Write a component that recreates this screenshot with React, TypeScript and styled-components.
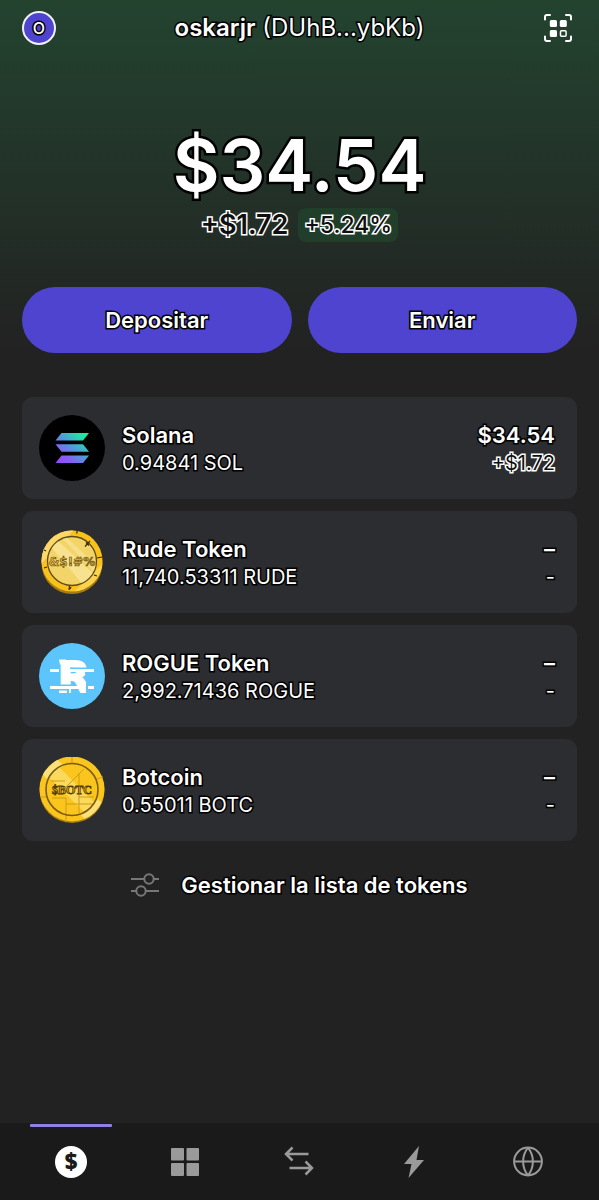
import React from "react";
import styled, { createGlobalStyle, css } from "styled-components";

const GlobalStyle = createGlobalStyle`
  *, *::before, *::after { box-sizing: border-box; }
  body {
    margin: 0;
    background: #222222;
    color: #ffffff;
    font-family: Inter, "Liberation Sans", sans-serif;
  }
  button { font: inherit; color: inherit; border: 0; padding: 0; background: none; cursor: pointer; }
  svg { display: block; flex: none; }
`;

const outlined = css`
  color: #ffffff;
  -webkit-text-stroke: 3px #000000;
  paint-order: stroke fill;
`;

const outlinedInverse = css`
  color: #101010;
  -webkit-text-stroke: 3px #ffffff;
  paint-order: stroke fill;
`;

const Page = styled.div`
  min-height: 100vh;
  display: flex;
  flex-direction: column;
  background: linear-gradient(#23432f 0, #222222 350px) #222222;
`;

const Header = styled.header`
  display: grid;
  grid-template-columns: 34px 1fr 34px;
  align-items: center;
  height: 56px;
  padding: 0 22px;
`;

const Avatar = styled.button`
  && {
    ${outlined}
    width: 34px;
    height: 34px;
    border: 2px solid #f0f0f8;
    border-radius: 50%;
    background: #4f44cf;
    font-size: 16px;
    font-weight: 500;
    line-height: 30px;
  }
`;

const WalletName = styled.h1`
  ${outlined}
  margin: 0;
  text-align: center;
  font-size: 24px;
  line-height: 32px;
  font-weight: 400;
  strong { font-weight: 600; }
`;

const ScanButton = styled.button`
  justify-self: start;
`;

const Main = styled.main`
  flex: 1;
  padding: 0 22px 24px;
`;

const Balance = styled.section`
  display: flex;
  flex-direction: column;
  align-items: center;
  padding-top: 66px;
`;

const Total = styled.div`
  ${outlined}
  -webkit-text-stroke-width: 5px;
  font-size: 72px;
  line-height: 86px;
  font-weight: 600;
`;

const ChangeRow = styled.div`
  display: flex;
  align-items: center;
  gap: 10px;
`;

const Change = styled.span`
  ${outlinedInverse}
  font-size: 27px;
  line-height: 34px;
  font-weight: 600;
`;

const Badge = styled.span`
  ${outlinedInverse}
  padding: 0 6px;
  border-radius: 8px;
  background: #213e2b;
  font-size: 23px;
  line-height: 34px;
  font-weight: 500;
`;

const Actions = styled.div`
  display: grid;
  grid-template-columns: 1fr 1fr;
  gap: 16px;
  margin-top: 45px;
`;

const ActionButton = styled.button`
  && {
    ${outlined}
    height: 66px;
    border-radius: 33px;
    background: #4f44cf;
    font-size: 22px;
    font-weight: 600;
  }
`;

const TokenList = styled.ul`
  list-style: none;
  margin: 44px 0 0;
  padding: 0;
  display: flex;
  flex-direction: column;
  gap: 12px;
`;

const TokenCard = styled.li`
  display: flex;
  align-items: center;
  gap: 17px;
  height: 102px;
  padding: 0 22px 0 17px;
  border-radius: 11px;
  background: #2c2d30;
`;

const TokenColumn = styled.div<{ $end?: boolean }>`
  display: flex;
  flex-direction: column;
  padding-top: 2px;
  ${(p) => (p.$end ? "align-items: flex-end; margin-left: auto;" : "")}
`;

const Strong = styled.span`
  ${outlined}
  font-size: 22px;
  line-height: 28px;
  font-weight: 600;
`;

const Small = styled.span<{ $inverse?: boolean }>`
  ${(p) => (p.$inverse ? outlinedInverse : outlined)}
  font-size: 20px;
  line-height: 28px;
`;

const ManageButton = styled.button`
  && {
    ${outlined}
    display: flex;
    align-items: center;
    gap: 22px;
    margin: 28px auto 0;
    font-size: 22px;
    line-height: 32px;
    font-weight: 600;
  }
`;

const TabBar = styled.nav`
  display: grid;
  grid-template-columns: repeat(5, 1fr);
  height: 77px;
  padding: 0 14px;
  background: #1a1a1a;
`;

const Tab = styled.button<{ $active?: boolean }>`
  && {
    display: flex;
    flex-direction: column;
    align-items: center;
    color: ${(p) => (p.$active ? "#ffffff" : "#9a9a9a")};
  }
  &::before {
    content: "";
    width: 82px;
    height: 3px;
    margin: 1px 0 19px;
    border-radius: 1px;
    background: ${(p) => (p.$active ? "#8f80e6" : "transparent")};
  }
`;

const ScanIcon = () => (
  <svg width="30" height="30" viewBox="0 0 30 30" fill="none" stroke="#fff" strokeWidth="2" strokeLinecap="round">
    <path d="M2 6.500V4a2 2 0 0 1 2-2h3M23 2h3a2 2 0 0 1 2 2v2.500M28 23.500V26a2 2 0 0 1-2 2h-3M7 28H4a2 2 0 0 1-2-2v-2.500" />
    <rect x="6.800" y="7" width="7.200" height="7" rx="1.500" fill="#fff" stroke="none" />
    <rect x="16.800" y="7" width="7" height="7" rx="1.500" fill="#fff" stroke="none" />
    <rect x="6.800" y="17" width="7.200" height="7" rx="1.500" fill="#fff" stroke="none" />
    <rect x="17.500" y="17.700" width="5.600" height="5.600" rx="1" strokeWidth="1.500" />
  </svg>
);

const SolanaLogo = () => (
  <svg width="66" height="66" viewBox="0 0 66 66">
    <defs>
      <linearGradient id="sol" gradientUnits="userSpaceOnUse" x1="18" y1="49" x2="46" y2="17">
        <stop offset="0" stopColor="#9945ff" />
        <stop offset=".25" stopColor="#8a5cf5" />
        <stop offset=".55" stopColor="#4f9bdc" />
        <stop offset=".85" stopColor="#22e0a6" />
        <stop offset="1" stopColor="#19f09c" />
      </linearGradient>
    </defs>
    <circle cx="33" cy="33" r="33" fill="#000" />
    <g fill="url(#sol)">
      <path d="M22.500 18H50L44 25.500H16.500z" />
      <path d="M16.500 29.300H44L50 36.700H22.500z" />
      <path d="M22.500 40.500H50L44 48H16.500z" />
    </g>
  </svg>
);

const RudeLogo = () => (
  <svg width="66" height="66" viewBox="0 0 66 66">
    <defs>
      <clipPath id="rudeFace"><circle cx="33" cy="32" r="24" /></clipPath>
      <clipPath id="rudeRim"><circle cx="33" cy="32" r="30.500" /></clipPath>
    </defs>
    <circle cx="33" cy="34.500" r="30.500" fill="#a87c14" />
    <circle cx="33" cy="32" r="30.500" fill="#f9c11c" />
    <g clipPath="url(#rudeRim)">
      <path d="M0 20L20 0H36L0 37z" fill="#fbd867" />
      <path d="M32 66L66 32V48L48 66z" fill="#fbd34f" />
    </g>
    <circle cx="33" cy="32" r="24.500" fill="#f3d468" stroke="#5d4a17" strokeWidth="1.300" />
    <g clipPath="url(#rudeFace)">
      <path d="M12 18L18 11L56 46L46 58z" fill="#fbe9a6" opacity=".65" />
      <path d="M22 8L26 7L62 40L58 46z" fill="#fbe9a6" opacity=".5" />
    </g>
    <path d="M38.500 1.500l-1 3M51 12l-5 5.500m1-4l3 3M5 21l2 1M5 39l3-1M30.500 57l-.500 4m2-3l-1 2M55 46l3 1M58 29l5-1" stroke="#3c2c08" strokeWidth="1.200" fill="none" />
    <text x="33" y="36.500" textAnchor="middle" fontFamily="DejaVu Sans, sans-serif" fontWeight="700" fontSize="12" fill="#eac04a" stroke="#6b5214" strokeWidth=".7">&amp;$!#%</text>
  </svg>
);

const RogueLogo = () => (
  <svg width="66" height="66" viewBox="0 0 66 66">
    <circle cx="33" cy="33" r="33" fill="#5bc5fc" />
    <text x="35" y="48.500" textAnchor="middle" fontFamily="DejaVu Sans, sans-serif" fontWeight="700" fontSize="42" fill="#fff" stroke="#fff" strokeWidth="2">R</text>
    <path d="M31 24.500h25v1.500H31zM46 29h5v2h-5zM18 41.500h14v1.500H18zM18 46h12v5H18zM47 40h7v11h-7z" fill="#5bc5fc" />
    <path d="M20 16.500h7v5h-6zM11 26h9v3h-9zM30 26h25v3H30zM11 43h29v3H11zM49 43h6v3h-6zM20 47.500h8v2.500h-8z" fill="#fff" />
  </svg>
);

const BotcoinLogo = () => (
  <svg width="66" height="66" viewBox="0 0 66 66">
    <defs>
      <clipPath id="botCoin"><circle cx="33" cy="32" r="32.500" /></clipPath>
      <clipPath id="botFace"><circle cx="33" cy="32.500" r="25.500" /></clipPath>
    </defs>
    <circle cx="33" cy="33.500" r="32.500" fill="#a57b12" />
    <circle cx="33" cy="32" r="32.500" fill="#fac51d" />
    <g clipPath="url(#botCoin)">
      <path d="M3 17L18 2l6 6L9 23z" fill="#fce07a" />
      <path d="M42 58L58 42l8 6L50 66z" fill="#fce07a" />
    </g>
    <g clipPath="url(#botFace)">
      <path d="M11 21L21 11L57 47L47 57z" fill="#fbd95c" />
    </g>
    <path d="M33 0v7M40 16v24h15M27 30L45 12M13 41h14v24M27 47h28M2 40h7M58 22l6-2M40 40v16M12 24h14" stroke="#cf9c17" fill="none" />
    <circle cx="33" cy="32.500" r="26" fill="none" stroke="#7c5b0c" strokeWidth="1.600" />
    <text x="33" y="37" textAnchor="middle" fontFamily="Liberation Serif, serif" fontWeight="700" fontSize="12" fill="#e3ae1c" stroke="#4f3906" strokeWidth=".8">$BOTC</text>
  </svg>
);

const SlidersIcon = () => (
  <svg width="28" height="26" viewBox="0 0 28 26" fill="none" stroke="#777" strokeWidth="2">
    <path d="M0 7h13M23 7h5M0 19h5M15 19h13" />
    <circle cx="18" cy="7" r="4.700" />
    <circle cx="10" cy="19" r="4.700" />
  </svg>
);

const DollarIcon = () => (
  <svg width="32" height="32" viewBox="0 0 32 32">
    <circle cx="16" cy="16" r="16" fill="currentColor" />
    <text x="16" y="23.500" textAnchor="middle" fontFamily="Open Sans, sans-serif" fontWeight="800" fontSize="22" fill="#1a1a1a">$</text>
  </svg>
);

const GridIcon = () => (
  <svg width="32" height="32" viewBox="0 0 32 32" fill="currentColor">
    <rect x="2" y="2" width="13" height="12.500" rx="1" />
    <rect x="17.500" y="2" width="12.500" height="12.500" rx="1" />
    <rect x="2" y="17" width="13" height="13" rx="1" />
    <rect x="17.500" y="17" width="12.500" height="13" rx="1" />
  </svg>
);

const SwapIcon = () => (
  <svg width="32" height="32" viewBox="0 0 32 32" fill="none" stroke="currentColor" strokeWidth="2.500">
    <path d="M25.500 8H2.500M9.500 1.500L3 8l6.500 6.500M6.500 22H29.500M22.500 15.500L29 22l-6.500 6.500" />
  </svg>
);

const BoltIcon = () => (
  <svg width="32" height="32" viewBox="0 0 32 32" fill="currentColor">
    <path d="M21 0L6 18H13.500L10.500 32L26 14H18.500z" />
  </svg>
);

const GlobeIcon = () => (
  <svg width="32" height="32" viewBox="0 0 32 32" fill="none" stroke="currentColor" strokeWidth="2">
    <circle cx="16" cy="15.500" r="13.900" />
    <path d="M2 15.500h28M16 1.600c-6.500 8-6.500 20 0 27.800M16 1.600c6.500 8 6.500 20 0 27.800" />
  </svg>
);

const tokens = [
  { name: "Solana", amount: "0.94841 SOL", value: "$34.54", change: "+$1.72", gain: true, Logo: SolanaLogo },
  { name: "Rude Token", amount: "11,740.53311 RUDE", value: "–", change: "-", gain: false, Logo: RudeLogo },
  { name: "ROGUE Token", amount: "2,992.71436 ROGUE", value: "–", change: "-", gain: false, Logo: RogueLogo },
  { name: "Botcoin", amount: "0.55011 BOTC", value: "–", change: "-", gain: false, Logo: BotcoinLogo },
];

const tabs = [
  { label: "Saldo", Icon: DollarIcon },
  { label: "Coleccionables", Icon: GridIcon },
  { label: "Intercambiar", Icon: SwapIcon },
  { label: "Actividad", Icon: BoltIcon },
  { label: "Explorar", Icon: GlobeIcon },
];

export default function App() {
  return (
    <Page>
      <GlobalStyle />
      <Header>
        <Avatar>O</Avatar>
        <WalletName>
          <strong>oskarjr</strong> (DUhB...ybKb)
        </WalletName>
        <ScanButton aria-label="Escanear">
          <ScanIcon />
        </ScanButton>
      </Header>
      <Main>
        <Balance>
          <Total>$34.54</Total>
          <ChangeRow>
            <Change>+$1.72</Change>
            <Badge>+5.24%</Badge>
          </ChangeRow>
        </Balance>
        <Actions>
          <ActionButton>Depositar</ActionButton>
          <ActionButton>Enviar</ActionButton>
        </Actions>
        <TokenList>
          {tokens.map(({ name, amount, value, change, gain, Logo }) => (
            <TokenCard key={name}>
              <Logo />
              <TokenColumn>
                <Strong>{name}</Strong>
                <Small>{amount}</Small>
              </TokenColumn>
              <TokenColumn $end>
                <Strong>{value}</Strong>
                <Small $inverse={gain}>{change}</Small>
              </TokenColumn>
            </TokenCard>
          ))}
        </TokenList>
        <ManageButton>
          <SlidersIcon />
          Gestionar la lista de tokens
        </ManageButton>
      </Main>
      <TabBar>
        {tabs.map(({ label, Icon }, i) => (
          <Tab key={label} $active={i === 0} aria-label={label}>
            <Icon />
          </Tab>
        ))}
      </TabBar>
    </Page>
  );
}
